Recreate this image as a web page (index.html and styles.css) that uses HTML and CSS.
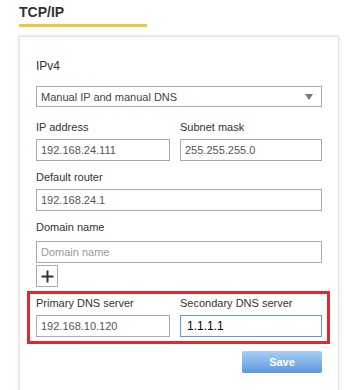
FILE: index.html
```html
<!DOCTYPE html>
<html lang="en">
<head>
  <meta charset="UTF-8">
  <meta name="viewport" content="width=device-width, initial-scale=1">
  <title>TCP/IP</title>
  <link rel="stylesheet" href="styles.css">
</head>
<body>
  <div class="tab">
    <h1 class="tab-title">TCP/IP</h1>
  </div>

  <div class="card">
    <h2 class="section-title">IPv4</h2>

    <div class="select">
      <span class="select-value">Manual IP and manual DNS</span>
      <span class="select-arrow"></span>
    </div>

    <div class="row two-col">
      <div class="field">
        <label class="label">IP address</label>
        <input class="input" type="text" value="192.168.24.111">
      </div>
      <div class="field">
        <label class="label">Subnet mask</label>
        <input class="input" type="text" value="255.255.255.0">
      </div>
    </div>

    <div class="row">
      <div class="field">
        <label class="label">Default router</label>
        <input class="input" type="text" value="192.168.24.1">
      </div>
    </div>

    <div class="row">
      <div class="field field-domain">
        <label class="label">Domain name</label>
        <input class="input" type="text" placeholder="Domain name">
      </div>
      <button class="add-btn" type="button" aria-label="Add">
        <svg width="13" height="13" viewBox="0 0 13 13">
          <path d="M6.5 0.5v12M0.5 6.5h12" stroke="#333" stroke-width="2" fill="none"/>
        </svg>
      </button>
    </div>

    <!-- highlighted DNS fields -->
    <div class="dns-box two-col">
      <div class="field">
        <label class="label">Primary DNS server</label>
        <input class="input" type="text" value="192.168.10.120">
      </div>
      <div class="field">
        <label class="label">Secondary DNS server</label>
        <input class="input input-focus" type="text" value="1.1.1.1">
      </div>
    </div>

    <div class="actions">
      <button class="save-btn" type="button">Save</button>
    </div>
  </div>
</body>
</html>
```

FILE: styles.css
```css
/* Reset & Base Styles */
* {
  box-sizing: border-box;
  margin: 0;
  padding: 0;
}
body {
  font-family: "Liberation Sans", Arial, sans-serif;
  background: #fff;
  color: #333;
  padding: 0 0 0 19px;
}
/* Tab header */
.tab {
  width: 128px;
  padding-top: 4px;
  padding-bottom: 4px;
  border-bottom: 3px solid #ecc83a;
}
.tab-title {
  font-size: 14px;
  line-height: 16px;
  font-weight: bold;
  color: #333;
}
/* Card */
.card {
  width: 320px;
  margin-top: 9px;
  padding: 22px 16px 40px 16px;
  border: 1px solid #e2e2e2;
  box-shadow: 0 0 4px rgba(0,0,0,0.12);
  background: #fff;
}
.section-title {
  font-size: 12px;
  line-height: 14px;
  font-weight: normal;
  color: #333;
  margin-bottom: 13px;
}
.select {
  height: 21px;
  border: 1px solid #aaa;
  display: flex;
  align-items: center;
  justify-content: space-between;
  padding: 0 8px 0 4px;
  font-size: 11px;
  color: #444;
}
.select-arrow {
  width: 0;
  height: 0;
  border-left: 4px solid transparent;
  border-right: 4px solid transparent;
  border-top: 6px solid #777;
}
.row {
  margin-top: 13px;
}
.row + .row {
  margin-top: 9px;
}
.two-col {
  display: grid;
  grid-template-columns: 134px 142px;
  column-gap: 10px;
}
.field {
  display: flex;
  flex-direction: column;
}
.label {
  font-size: 11px;
  line-height: 14px;
  color: #333;
  margin-bottom: 5px;
}
.field-domain .label {
  margin-bottom: 7px;
}
.input {
  height: 22px;
  border: 1px solid #aaa;
  padding: 0 4px;
  font-family: inherit;
  font-size: 11px;
  color: #555;
  background: #fff;
  outline: none;
}
.input::placeholder {
  color: #999;
}
.input-focus {
  border-color: #5b9bd8;
  color: #000;
  font-size: 12px;
  padding-left: 6px;
}
.add-btn {
  display: flex;
  align-items: center;
  justify-content: center;
  width: 22px;
  height: 22px;
  margin-top: 2px;
  border: 1px solid #aaa;
  background: #fff;
}
/* Red highlight */
.dns-box {
  margin: 4px -8px 0 -9px;
  padding: 2px 5px 4px 6px;
  border: 3px solid #e5262b;
}
.actions {
  display: flex;
  justify-content: flex-end;
  margin-top: 7px;
}
.save-btn {
  width: 80px;
  height: 22px;
  border: none;
  border-radius: 2px;
  background: linear-gradient(180deg, #a8d0f6, #5d96dc);
  color: #fff;
  font-family: inherit;
  font-size: 11px;
  font-weight: bold;
}
```
